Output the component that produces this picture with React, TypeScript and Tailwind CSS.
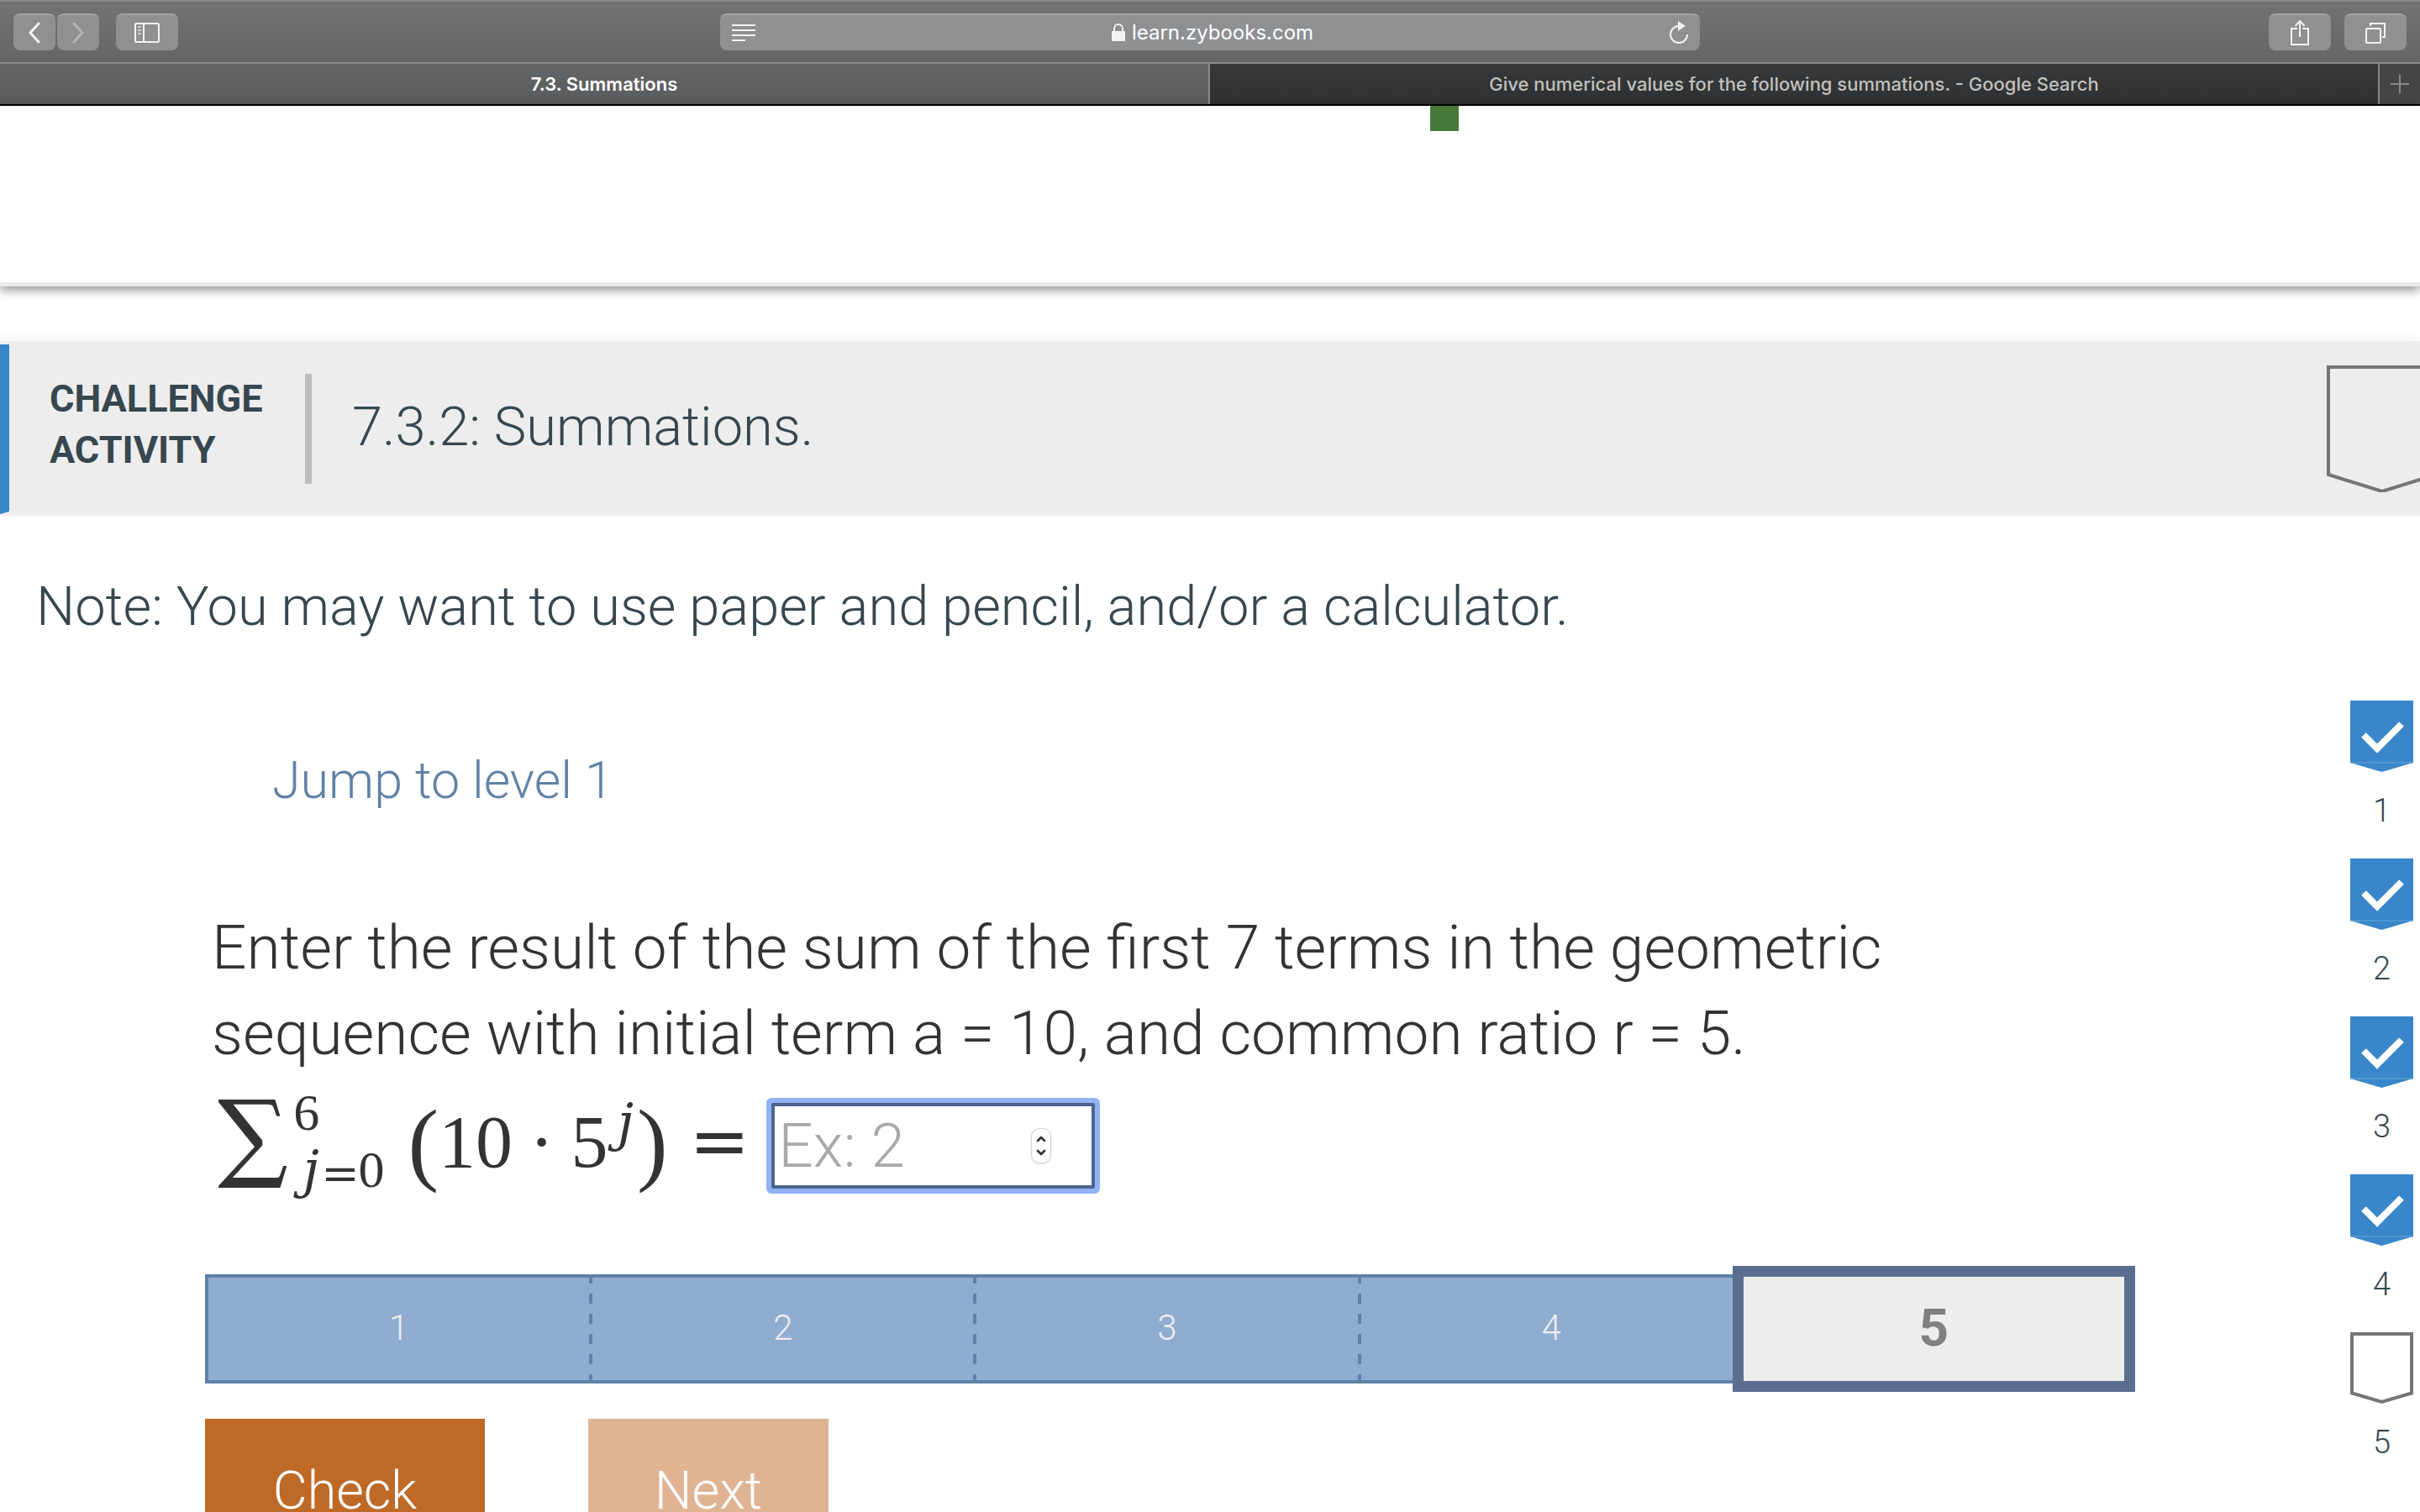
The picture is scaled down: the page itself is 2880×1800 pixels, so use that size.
import React, { useState } from 'react';
import { ChevronDown, ChevronUp } from 'lucide-react';

const LEVELS = [1, 2, 3, 4, 5];
const CURRENT_LEVEL = 5;

const Toolbar: React.FC = () => {
  const button = 'flex h-11 items-center rounded-lg border-t-2 border-[#a3a4a6] bg-[#8f9092] text-[#f2f2f2]';

  return (
    <div className="flex h-[76px] items-center justify-between border-y-2 border-[#87898b] bg-linear-to-b from-[#727375] to-[#646567] px-4">
      <div className="flex flex-1 items-center">
        <button type="button" aria-label="Back" className={`${button} w-[50px] justify-center`}>
          <svg width="16" height="26" viewBox="0 0 16 26" fill="none" stroke="currentColor" strokeWidth="3">
            <path d="M13 2 3 13l10 11" strokeLinecap="round" strokeLinejoin="round" />
          </svg>
        </button>
        <button type="button" aria-label="Forward" className={`${button} ml-0.5 w-[50px] justify-center`}>
          <svg width="16" height="26" viewBox="0 0 16 26" fill="none" stroke="#b4b5b6" strokeWidth="3">
            <path d="M3 2l10 11L3 24" strokeLinecap="round" strokeLinejoin="round" />
          </svg>
        </button>
        <button type="button" aria-label="Show sidebar" className={`${button} ml-5 w-[74px] justify-center`}>
          <svg width="30" height="24" viewBox="0 0 30 24" fill="none" stroke="currentColor" strokeWidth="2">
            <rect x="1" y="1" width="28" height="22" rx="1.5" />
            <path d="M11 1v22" />
            <path d="M4 5h4M4 9h4M4 13h4" stroke="#d0d0d0" />
          </svg>
        </button>
      </div>
      <div className={`${button} w-[1166px] justify-between px-3.5`}>
        <button type="button" aria-label="Reader view">
          <svg width="28" height="22" viewBox="0 0 28 22" stroke="currentColor" strokeWidth="2">
            <path d="M0 2h28M0 8h28M0 14h28M0 20h16" />
          </svg>
        </button>
        <div className="flex items-center gap-2 text-[24px] leading-8">
          <svg width="16" height="22" viewBox="0 0 16 22" fill="none">
            <rect x="0" y="9" width="16" height="12" rx="1" fill="currentColor" />
            <path d="M3 10V6a5 5 0 0 1 10 0v4" stroke="currentColor" strokeWidth="2" />
          </svg>
          <span className="text-white">learn.zybooks.com</span>
        </div>
        <button type="button" aria-label="Reload">
          <svg width="22" height="28" viewBox="0 0 22 28" fill="none">
            <path d="M11 6a10 10 0 1 0 10 10" stroke="currentColor" strokeWidth="2" />
            <path d="M10 0v12l9-6z" fill="currentColor" />
          </svg>
        </button>
      </div>
      <div className="flex flex-1 items-center justify-end gap-4">
        <button type="button" aria-label="Share" className={`${button} w-[74px] justify-center`}>
          <svg width="24" height="32" viewBox="0 0 24 32" fill="none" stroke="currentColor" strokeWidth="2">
            <path d="M9 11H2v19h20V11h-7" />
            <path d="M12 21V2M6.500 8 12 2l5.500 6" />
          </svg>
        </button>
        <button type="button" aria-label="Show all tabs" className={`${button} w-[74px] justify-center`}>
          <svg width="26" height="26" viewBox="0 0 26 26" fill="none" stroke="currentColor" strokeWidth="2">
            <rect x="2" y="8" width="17" height="17" rx="1.5" />
            <path d="M7 5V2h17v16h-3" />
          </svg>
        </button>
      </div>
    </div>
  );
};

const TabBar: React.FC = () => (
  <nav className="flex h-[50px] border-b-2 border-black text-[22px] leading-7">
    <a href="#summations" className="flex w-1/2 items-center justify-center border-r-2 border-[#87898b] bg-linear-to-b from-[#646567] to-[#5a5b5d] font-semibold text-white">
      7.3. Summations
    </a>
    <a href="#search" className="flex flex-1 items-center justify-center bg-linear-to-b from-[#373839] to-[#2f3031] font-medium text-[#c0c0be]">
      Give numerical values for the following summations. - Google Search
    </a>
    <button type="button" aria-label="New tab" className="flex w-[50px] items-center justify-center border-l-2 border-[#87898b] bg-[#444547]">
      <svg width="22" height="22" viewBox="0 0 22 22" stroke="#87898b" strokeWidth="2">
        <path d="M11 0v22M0 11h22" />
      </svg>
    </button>
  </nav>
);

const Ribbon: React.FC<{ done: boolean }> = ({ done }) => (
  <svg width="75" height="86" viewBox="0 0 75 86" fill="none">
    {done ? (
      <>
        <path d="M0 0h75v74L37.500 85 0 74z" fill="#3987ca" />
        <path d="M0 74h75" stroke="#6ba5d8" />
        <path d="M16 41 32 57 61 28" stroke="white" strokeWidth="8" />
      </>
    ) : (
      <path d="M2 2h71v70.500L37.500 83 2 72.500z" stroke="#757575" strokeWidth="4" />
    )}
  </svg>
);

const Formula: React.FC = () => (
  <span className="flex items-center pb-2 font-['Liberation_Serif','DejaVu_Math_TeX_Gyre',serif] text-[88px] leading-[110px] font-normal">
    <span className="font-['DejaVu_Math_TeX_Gyre',serif] text-[100px]">∑</span>
    <span className="flex flex-col text-[62px] leading-[68px]">
      <span>6</span>
      <span>𝑗<span className="font-['DejaVu_Math_TeX_Gyre',serif] text-[54px]">=</span>0</span>
    </span>
    <span className="ml-7 text-[110px]">(</span>
    <span>10</span>
    <span className="mx-5">·</span>
    <span>5</span>
    <span className="mb-12 text-[62px] leading-[62px]">𝑗</span>
    <span className="text-[110px]">)</span>
    <span className="mx-7 font-['DejaVu_Math_TeX_Gyre',serif] text-[86px]">=</span>
  </span>
);

const App: React.FC = () => {
  const [answer, setAnswer] = useState('');

  return (
    <div className="flex h-screen flex-col overflow-hidden bg-white font-[Roboto,sans-serif] font-light text-[#37474f]">
      <header className="shrink-0 font-[Inter,sans-serif] font-normal">
        <Toolbar />
        <TabBar />
      </header>

      <section className="h-[215px] shrink-0 border-b-[5px] border-[#eaeaea] shadow-[0_4px_12px_rgba(0,0,0,0.45)]">
        <div className="ml-[59.1%] h-[30px] w-[34px] bg-[#47793b]" />
      </section>

      <section className="mt-[65px] shrink-0">
        <div className="flex h-[208px] items-center bg-[#ededed] shadow-[0_-4px_12px_rgba(0,0,0,0.04)]">
          <svg className="shrink-0" width="11" height="204" viewBox="0 0 11 204">
            <path d="M0 2h11v199L0 204z" fill="#3987ca" />
          </svg>
          <div className="ml-12 w-[304px] pb-2.5 text-[45px] leading-[61px] font-bold">
            CHALLENGE<br />ACTIVITY
          </div>
          <div className="h-[131px] w-2 bg-[#bdbdbd]" />
          <h1 className="ml-12 flex-1 pb-1 text-[65px] leading-[80px]">7.3.2: Summations.</h1>
          <svg className="-mr-[21px] shrink-0" width="132" height="152" viewBox="0 0 132 152" fill="none">
            <path d="M2 3h128v128L66 151 2 131z" stroke="#757575" strokeWidth="4" />
          </svg>
        </div>
        <p className="mt-[68px] pl-[43px] text-[65px] leading-[80px]">
          Note: You may want to use paper and pencil, and/or a calculator.
        </p>
      </section>

      <div className="mt-[72px] flex pr-2">
        <main className="flex-1 pr-[259px] pl-[244px]">
          <a href="#level-1" className="mt-[55px] ml-20 block w-fit text-[61px] leading-[80px] text-[#6082a7]">
            Jump to level 1
          </a>
          <div className="mt-[108px] pl-2 text-[73px] leading-[102px] text-[#333]">
            <p className="max-w-[2100px]">
              Enter the result of the sum of the first 7 terms in the geometric sequence with initial term a = 10, and common ratio r = 5.
            </p>
            <label className="mt-[21px] flex h-[124px] items-center">
              <Formula />
              <span className="flex h-[102px] w-[385px] items-center rounded-xs border-4 border-[#4b658f] bg-white pr-12 ring-6 ring-[#91b3f5]">
                <input
                  type="text"
                  inputMode="numeric"
                  placeholder="Ex: 2"
                  value={answer}
                  onChange={(e) => setAnswer(e.target.value)}
                  className="w-full min-w-0 flex-1 pl-1 outline-none placeholder:text-[#a9a9a9]"
                />
                <span className="flex h-[42px] w-6 flex-col items-center justify-between rounded-[10px] border border-[#d0d0d0] py-1 shadow-sm">
                  <ChevronUp size={16} strokeWidth={4} />
                  <ChevronDown size={16} strokeWidth={4} />
                </span>
              </span>
            </label>
          </div>

          <ol className="mt-[91px] grid h-[130px] grid-cols-5 border-4 border-[#5f81a8] bg-[#90add1] text-[42px] text-[#eee]">
            {LEVELS.map((level) =>
              level === CURRENT_LEVEL ? (
                <li key={level} className="-my-[14px] -mr-[7px] -ml-[15px] flex items-center justify-center border-[13px] border-[#5c6e8f] bg-[#ededed] pb-1 text-[62px] font-bold text-[#808080]">
                  {level}
                </li>
              ) : (
                <li key={level} className="flex items-center justify-center bg-[linear-gradient(#5f81a8_25%,transparent_25%_75%,#5f81a8_75%)] bg-[length:4px_24px] bg-right bg-repeat-y pr-1 pb-1">
                  {level}
                </li>
              )
            )}
          </ol>

          <div className="mt-[42px] flex gap-[123px] text-[63px] text-white">
            <button type="button" className="h-[168px] w-[333px] bg-[#be6926] pt-1">Check</button>
            <button type="button" className="h-[168px] w-[286px] bg-[#e0b493] pt-1">Next</button>
          </div>
        </main>

        <ol className="flex w-[75px] flex-col text-[38px] leading-[48px]">
          {LEVELS.map((level) => (
            <li key={level} className="flex h-[188px] flex-col items-center gap-[21px]">
              <Ribbon done={level < CURRENT_LEVEL} />
              {level}
            </li>
          ))}
        </ol>
      </div>
    </div>
  );
};

export default App;
